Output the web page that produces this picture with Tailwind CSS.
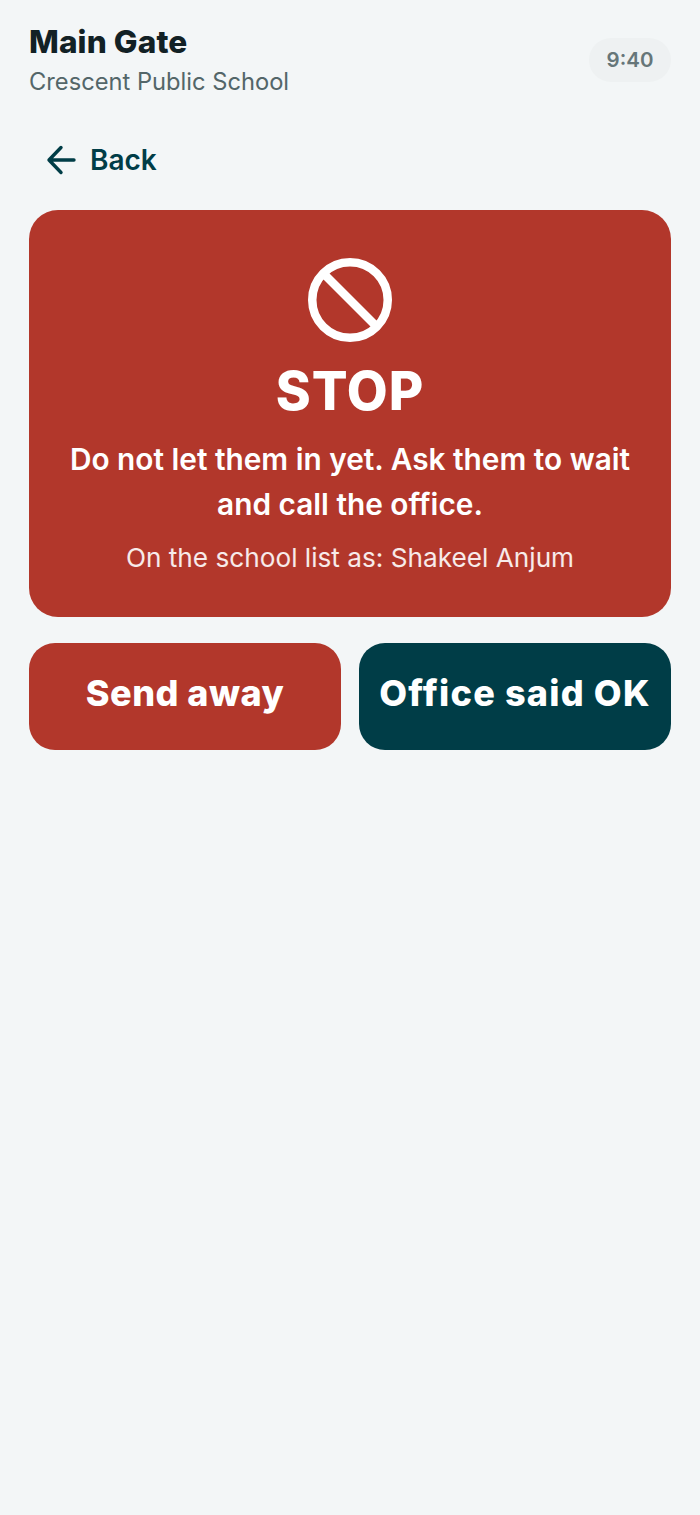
<!DOCTYPE html>
<html lang="en">
<head>
  <meta charset="UTF-8">
  <script src="https://cdn.jsdelivr.net/npm/@tailwindcss/browser@4"></script>
  <title>Main Gate</title>
</head>
<body class="bg-[#f3f6f7] font-['Inter',sans-serif] h-[1515px]">
  <div class="px-[29px] pt-[22px]">
    <!-- Header -->
    <div class="flex justify-between items-center h-[78px]">
      <div>
        <div class="text-[31.6px] leading-[40px] font-extrabold tracking-[0.1px] text-[#122125]">Main Gate</div>
        <div class="text-[23.7px] leading-[39px] text-[#536669]">Crescent Public School</div>
      </div>
      <div class="h-[44px] w-[82px] mb-[2px] flex items-center justify-center rounded-[22px] bg-[#eef1f2] text-[20.5px] font-semibold text-[#667679]">9:40</div>
    </div>

    <!-- Back -->
    <div class="flex items-center gap-[13px] h-[60px] mt-[30px] pl-[16px]">
      <svg class="w-[32px] h-[32px]" viewBox="0 0 32 32" fill="none" stroke="#003d47" stroke-width="3.4" stroke-linecap="round" stroke-linejoin="round">
        <path d="M29 16H4M16 3.5L4 16l12 12.5"/>
      </svg>
      <span class="text-[28px] font-semibold text-[#003d47]">Back</span>
    </div>

    <!-- Stop card -->
    <div class="mt-[20px] h-[407px] rounded-[29px] bg-[#b2372b] flex flex-col items-center text-white text-center pt-[48px]">
      <svg class="w-[84px] h-[84px]" viewBox="0 0 84 84" fill="none" stroke="#fff" stroke-width="8.5">
        <circle cx="42" cy="42" r="37.75"/>
        <path d="M15.5 15.5l53 53"/>
      </svg>
      <div class="text-[53px] leading-[60px] font-extrabold tracking-[1px] mt-[19px]">STOP</div>
      <div class="text-[29.8px] leading-[45px] font-semibold mt-[16px] w-[600px]">Do not let them in yet. Ask them to wait and call the office.</div>
      <div class="text-[26.2px] leading-[36px] text-white/90 mt-[13px]">On the school list as: Shakeel Anjum</div>
    </div>

    <!-- Actions -->
    <div class="grid grid-cols-2 gap-[18px] mt-[26px]">
      <button class="h-[107px] rounded-[26px] bg-[#b2372b] text-white text-[36px] font-extrabold tracking-[0.5px] pb-[8px]">Send away</button>
      <button class="h-[107px] rounded-[26px] bg-[#003d47] text-white text-[36px] font-extrabold tracking-[1.2px] pb-[8px]">Office said OK</button>
    </div>
  </div>
</body>
</html>
